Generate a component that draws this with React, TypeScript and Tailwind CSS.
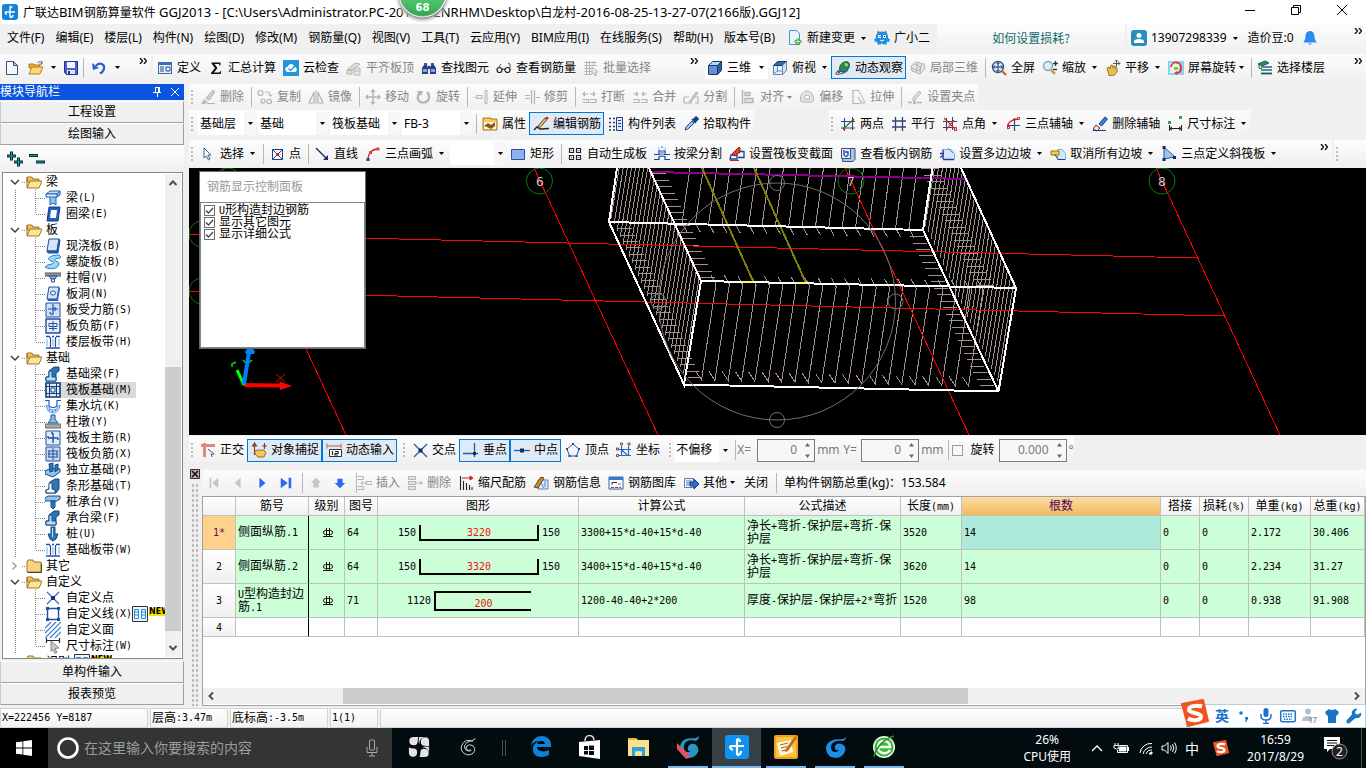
import React, { ReactNode } from "react";
import clsx from "clsx";

/* ---------- drawing helpers ---------- */

function P({ d, s = "none", f = "none", w = 1 }: { d: string; s?: string; f?: string; w?: number }) {
  return <path d={d} stroke={s} fill={f} strokeWidth={w} />;
}

const G = "#b4b4b4";
const N = "#1f3f94";
const R = "#d02020";

const icons: Record<string, ReactNode> = {
  newFile: <><P d="M2.500 1.500h7l4 4v9h-11z" s="#3d5272" f="#f4f9ff" /><P d="M9.500 1.500v4h4z" s="#3d5272" f="#b9cbe4" /></>,
  open: <><P d="M1 4h5l1 1h5v3H1z" f="#e0a93a" s="#b27c1c" /><P d="M1 14l3-7h11l-3 7z" f="#ffd978" s="#b9831f" /><P d="M9 3c2-2 4-2 5 0M14 1v3h-3" s="#3b6ea5" /></>,
  save: <><P d="M1.500 1.500h13v13h-11l-2-2z" s="#27318f" f="#4a5fd0" /><P d="M4 2h8v6H4z" f="#f2f5ff" /><P d="M4 10h8v4H4z" f="#dfe3f5" /><P d="M5 11h2v3H5z" f="#27318f" /></>,
  undo: <><P d="M5 5.500C9 2 14 4 13 8.500c-.4 2.500-2 4-4 5" s="#2d5fc4" w={2.2} /><P d="M1 3l1 7 6-2z" f="#2d5fc4" /></>,
  define: <><P d="M1 2h14v12H1z" f="#3a6cb4" /><P d="M2 5h12v8H2z" f="#e8f1fc" /><P d="M3 7h4M3 9h4M3 11h4M9 7h4M9 11h4M9 7v4M13 7v4" s="#274a86" /></>,
  sigma: <P d="M3.500 2.500h9v3h-1l-.5-1.500H6.500L9.500 8l-3.500 4.500h5.500l1-1.500h.7l-.4 3H3v-1L7 8 3.500 3.500z" f="#111" />,
  cloud: <><P d="M0 0h16v16H0z" f="#2196dc" /><P d="M3 11C1 8 4 6 5 7c0-4 6-4 6 0 4 0 3 5 1 5H4z" f="#fff" /><P d="M5.500 8.500l2 2L12 6" s="#2196dc" w={1.3} /></>,
  alignTop: <><P d="M1 10l8-7 5 1-7 6zM1 10h5v4H1z" f="#dedede" s={G} /><P d="M8 8h6v7H8zM8 11h6" s={G} f="#e9e9e9" /></>,
  binocular: <><P d="M3 3h3v3H3zM10 3h3v3h-3z" f="#3d5a9c" /><P d="M1 8l2-3h3l1 3v6H1zM15 8l-2-3h-3L9 8v6h6z" f="#253f82" /><P d="M2 9h4v3H2zM10 9h4v3h-4z" f="#86a6dc" /><P d="M7 6h2v3H7z" f="#253f82" /></>,
  glasses: <><P d="M1 10a2.500 2.500 0 1 0 5 0 2.500 2.500 0 1 0-5 0M9 10a2.500 2.500 0 1 0 5 0 2.500 2.500 0 1 0-5 0M6 9.500q1.500-1 3 0" s="#222" w={1.2} /><P d="M1 10l4-6M14 10V4l-2-1" s="#445577" /></>,
  batch: <><P d="M1.500 2.500h12M1.500 5.500h12M1.500 8.500h7M1.500 11.500h7M1.500 14.500h7M3.500 1v14M6.500 1v14M10.500 1v5" s={G} /><P d="M9 7l6 5-3 .3 1.500 3-1.500.5-1.300-3L9 14z" f="#eee" s={G} /></>,
  cube: <><P d="M1.500 5.500h9v9h-9z" f="#5e94cf" s="#1c3763" /><P d="M1.500 5.500l4-4h9l-4 4z" f="#b8d6f4" s="#1c3763" /><P d="M10.500 5.500l4-4v9l-4 4z" f="#2f62a3" s="#1c3763" /></>,
  topView: <><P d="M1.500 5.500h9v9h-9z" f="#e9f3fd" s="#5a86b8" /><P d="M1.500 5.500l4-4h9l-4 4z" f="#336cae" s="#1c3763" /><P d="M10.500 5.500l4-4v9l-4 4zM5.500 6v5l-4 3M5.500 11h5" s="#5a86b8" f="#cfe2f5" /></>,
  orbit: <><P d="M6 12C2 8 7 0 13 2c4 4-1 11-7 10z" f="#2f8f3c" s="#155c20" /><P d="M10 3c2 0 3 1 3 3-2 1-4-1-3-3z" f="#9be08f" /><P d="M1 14C1 11 8 7 14 8M1 14c3 1 9-1 12-4" s="#3d66a8" w={1.3} /><P d="M3 11h2v2H3z" f={R} /></>,
  partial3d: <><P d="M1 6l5-4 8 2 1 5-5 5-8-3z" f="#e6e6e6" s={G} /><P d="M4 4l7 3-1 6M1 8l8 3M8 2.500L6 12M12 3.500L9 11" s={G} /></>,
  full: <><P d="M1.500 7a5.500 5.500 0 1 0 11 0 5.500 5.500 0 1 0-11 0" f="#dcecff" s="#35507d" w={1.4} /><P d="M11 11l4 4" s="#b07c2a" w={2.4} /><P d="M7 2.500v9M2.500 7h9M5.500 4L7 2.500 8.500 4M5.500 10L7 11.500 8.500 10M4 5.500L2.500 7 4 8.500M10 5.500L11.500 7 10 8.500" s="#1a3470" /></>,
  zoom: <><P d="M1.500 6a4.500 4.500 0 1 0 9 0 4.500 4.500 0 1 0-9 0" f="#dcecff" s="#8aa" w={1.4} /><P d="M9 10l4 4" s="#c39a3a" w={2.4} /><P d="M13.500 1v5M11 3.500h5M11 9.500h4" s="#1a3470" w={1.3} /></>,
  pan: <><P d="M2 8l2-1 1 2 1-4 2 .5L8 8l1-2 1.500.5L10 9l2-1v4l-3 3.500H4z" f="#e9bd55" s="#a87a1c" /><P d="M11.500 0v7M8 3.500h7M10 1.500L11.500 0 13 1.500M13.500 2L15 3.500 13.500 5" s="#555" /></>,
  rotScreen: <><P d="M0 1h16v14H0z" f="#8fd0f5" /><P d="M2 3h9v10H2z" f="#eaf7da" /><P d="M3 7a5 5 0 0 1 10 1c0 3-2 5-5 5" s="#e23434" w={1.8} /><P d="M9 11v4l-3-2z" f="#e23434" /><P d="M6 7h4v3H6z" f="#7fc36a" /></>,
  floor: <><P d="M1 4l7-3 4 2-7 3z" f="#2f9158" s="#17613a" /><P d="M4 7h11M4 10h11" s="#2d5fa8" w={1.6} /><P d="M4 13.500h11" s="#17613a" w={1.8} /><P d="M2 5v3l3 1" s="#17613a" /></>,
  brushOff: <><P d="M6 9l7-8 2 2-6 8z" f="#cfcfcf" s={G} /><P d="M4 10l4 3-3 2H1z" f="#bdbdbd" /><P d="M7 14.500h8" s={G} /></>,
  copy: <><P d="M1 4a2.500 2.500 0 1 0 5 0 2.500 2.500 0 1 0-5 0M4 12a2 2 0 1 0 4 0 2 2 0 1 0-4 0M10 12.500a2 2 0 1 0 4.500 0 2 2 0 1 0-4.500 0" s={G} w={1.2} /><P d="M8 3h4l1.500 4M11.500 5.500l2 2 1.500-2" s={G} /></>,
  mirror: <><P d="M6 3v11H1zM10 3v11h5z" s={G} w={1.2} /><P d="M8 1v14" s={G} /></>,
  move: <P d="M8 1v14M1 8h14M6 3l2-2 2 2M6 13l2 2 2-2M3 6L1 8l2 2M13 6l2 2-2 2" s={G} w={1.4} />,
  rotate: <><P d="M4 3C-1 9 3 14 8 13.500S15 7 11 3" s={G} w={2.2} /><P d="M1 2h6l-2 5z" f={G} /></>,
  extend: <><P d="M1 8.500h2M4 6.500h5v3H4z" s={G} w={1.2} /><P d="M12 1.500h2v13h-2z" s={G} /></>,
  trim: <P d="M7.500 1v14M10.500 1v14M1 6.500h5M1 9.500h5M12 8.500h4" s={G} w={1.2} />,
  brk: <P d="M2 5h5M2 5l2-2M2 5l2 2M9 5h5M14 5l-2-2M14 5l-2 2M1.500 10.500h6v3h-6M9 10.500h6v3H9" s={G} w={1.2} />,
  merge: <P d="M1 5h5M6 5L4 3M6 5L4 7M10 5h5M10 5l2-2M10 5l2 2M1 10.500h6v3H1M9 10.500h6v3H9" s={G} w={1.2} />,
  split: <><P d="M1 8h5M1 8v6h8M11 8h4v6h-3" s={G} w={1.2} /><P d="M6 13l7-10 2 1-7 9z" f="#ccc" s={G} /></>,
  align: <><P d="M2.500 1v14" s={G} w={1.5} /><P d="M5 3.500h5v3H5zM5 9.500h8v4H5z" s={G} f="#e6e6e6" w={1.3} /></>,
  offset: <><P d="M1.500 11C1 5 5 2 8 2s7 3 6.500 9q0 2-2 2h-9q-2 0-2-2z" f="#e4e4e4" s={G} /><P d="M5 10q0-4 3-4t3 4z" f="#fff" s={G} /></>,
  stretch: <><P d="M9 1.500H3v13h6M8 8l4 6" s={G} w={1.2} /><P d="M9 2l6 12H9" s={G} /></>,
  grip: <><P d="M1 13.500h4M10 13.500h5" s={G} w={1.4} /><P d="M6 9l6-7 2 2-6 7-2 .5z" f="#ddd" s={G} /><P d="M6 12h3v3H6z" f="#bbb" /></>,
  prop: <><P d="M1 2h8v1h6v11H1z" f="#f7c76a" s="#b37a1e" /><P d="M2 6h12v7H2z" f="#fff4d4" /><P d="M2 10l4-3 3 2 4-3v4l-4 3-4-2z" f="#8a5a18" /></>,
  edit: <><P d="M1 14l3-3 3 2 9-.5" s="#222" w={1.4} /><P d="M5 10l7-8 2 1.500-7 8z" f="#e8b96a" s="#6b4a1c" /><P d="M12 2l1.500-1.500L16 2l-2 1.500z" f={R} /></>,
  list: <><P d="M1 2.500h2M5 2.500h2M1 6.500h2M5 6.500h2M1 10.500h2M5 10.500h2M1 14h2M5 14h2" s="#335" w={1.4} /><P d="M8.500 1.500h6v13h-6z" f="#dbe9fb" s={N} /><P d="M10 4.500h3M10 7.500h3M10 10.500h3" s={N} /></>,
  picker: <><P d="M2 14l1-3 6-6 2 2-6 6z" f="#9ec9ee" s="#27508e" /><P d="M9 3l4 4M10 4l3-3 2 2-3 3z" f="#1b3f86" s="#1b3f86" w={1.6} /></>,
  twoPt: <><P d="M4.500 2v13M12.500 1v13M1 5.500h14M1 12h14" s="#32407e" /><P d="M3 13L14 3" s="#267a2c" w={1.3} /><P d="M3 12h2v2H3zM12 3h2v2h-2z" f={R} /></>,
  parallel: <P d="M4.500 1v14M11.500 1v14M1 5h14M1 11h14" s="#32407e" w={1.3} />,
  ptAngle: <><P d="M4.500 2v13M10.500 1v13M1 5.500h14M1 11.500h10" s="#32407e" /><P d="M2 2l11 11M12 4L4 14" s={R} w={1.1} /><P d="M12.500 11.500h2v3h-2z" s={R} /></>,
  threeAxis: <><P d="M9.500 2v13M2 9.500h13" s="#32407e" w={1.2} /><P d="M3 13C1 7 7 3 14 3" s={R} w={1.3} /><P d="M2.500 10.500h2v2h-2zM12.500 1.500h2v2h-2z" s={R} f="#fff" /></>,
  eraser: <><P d="M7 8l6-7 2.500 2-6 7z" f="#3f7fd0" s="#1b3f86" /><P d="M4 9l4 3-3 3-4-2z" f="#f0dcdc" s="#8a2020" /><P d="M1 14.500h13" s="#1b3f86" /></>,
  dim: <><P d="M2.500 9v6M14.500 9v6M2.500 12.500h12M5 11l-2.500 1.500L5 14M12 11l2.500 1.500L12 14" s="#222" /><P d="M1 5h3v3H1zM12 0h3v3h-3z" f="#38a050" /></>,
  pointer: <P d="M4 2l7 7H8l2 4-1.500 1L6.500 10 4 12z" f="#fff" s="#44608a" />,
  point: <><P d="M3.500 3.500h10v10h-10z" s={N} f="#fff" /><P d="M3.500 3.500l10 10M13.500 3.500l-10 10" s={N} /><P d="M7 7h3v3H7z" f={R} /></>,
  line: <><P d="M2 2l11 11" s="#1a2f6c" w={1.4} /><P d="M14 14H9l5-5z" f="#1a2f6c" /></>,
  arc: <><P d="M3 14C3 7 7 3 13 3" s={R} w={1.3} /><P d="M1.500 12h3v3h-3z" f="#1f3f94" /><P d="M11.500 1.500h3v3h-3zM4 5h3v3H4z" f="#cf4c3a" /></>,
  rect: <P d="M1.500 3.500h13v10h-13z" f="#8fb2ee" s="#2c50a8" />,
  autoSlab: <><P d="M2.500 2.500h4v4h-4zM9.500 2.500h4v4h-4zM2.500 9.500h4v4h-4zM9.500 9.500h4v4h-4z" s="#222" w={1.2} /><P d="M4 4h1v1H4zM11 4h1v1h-1zM4 11h1v1H4zM11 11h1v1h-1z" f="#2a5dc0" /></>,
  beamCut: <><P d="M0 8.500h16M0 13.500h5v-3h6v3h5M5 8V5h6v3" s={N} w={1.2} /><P d="M6 5.500h4v5H6z" f="#8fb2ee" /><P d="M8 0v2M5 1.500l1 1M11 1.500l-1 1M4 4h1M11 4h1" s="#2a78d0" /></>,
  raft: <><P d="M2 9h6v4H1zM9 5.500h6v6H9" s={N} w={1.3} /><P d="M3 8l7-7 1 1v4l-5 4z" f="#e04030" s="#8a1c10" /><P d="M1 14.500h9" s={R} /></>,
  viewRebar: <><P d="M3 2.500h12v11l-2 2H2.500z" f="#a9c6ea" s="#35507d" /><P d="M1.500 2.500h9v10h-9z" f="#e6f0fb" s="#35507d" /><P d="M4 4v5q2 3 4 0V6H5" s={N} w={1.3} /></>,
  slope: <><P d="M4.500 3.500h8l3 4v6h-11z" f="#d4e6fb" s="#8aaedb" /><P d="M1 7.500h4M4 13.500h11M4 3.500v6l-3 2M4 9v4" s={N} w={1.3} /><P d="M9 2l5 5" s="#5b86be" /></>,
  cancelSlope: <><P d="M7.500 3.500h5l3 4v6h-8z" f="#d4e6fb" s="#8aaedb" /><P d="M1 5h8v4H1z" f="#f7d03d" s="#9b7510" /><P d="M5 8.500l3 5h7" s={N} /></>,
  threeSlope: <><P d="M3 1v12l11-2z" f="#9fc3ee" s="#26519b" /><P d="M1.500 0h3v3h-3zM1.500 12h3v3h-3zM12 10h3v3h-3z" f="#16295c" /></>,
  ortho: <><P d="M1 3.500h14M4.500 1v14" s="#d88a84" w={3} /><P d="M8 7l6 5-3 .5 1.500 2.500" f="#dce6f4" s="#44608a" /></>,
  snap: <><P d="M3.500 1v12M13.500 1v6M1 4h5M11 4h5M3.500 1l-2 3h4z" s="#8a3a3a" w={1.2} /><P d="M4 9l3-1 6 0 2 3-2 4H7l-3-3z" f="#f0c566" s="#97711f" /></>,
  dyn: <><P d="M1 1.500v5M15 1.500v5M1 4h14" s="#c0605a" /><P d="M3.500 7.500h12v7h-12z" f="#fff" s="#333" /><P d="M6.500 9v4M9 9.500h3v2H9v1.500h3" s="#222" w={1.2} /></>,
  cross: <><P d="M2 2l13 13M15 2L2 15" s="#1f5bb0" w={1.3} /><P d="M6.500 6.500h4v4h-4z" f="#1a2f6c" /></>,
  perp: <><P d="M0 11.500h15M11.500 1v14" s="#1f5bb0" w={1.3} /><P d="M10 10h3v3h-3z" f="#1a2f6c" /></>,
  mid: <><P d="M0 8.500h16" s="#1f5bb0" w={1.3} /><P d="M6 6.500h4v4H6z" f="#1a2f6c" /></>,
  vertex: <><P d="M8 2l6 5-2.500 7h-7L2 7z" s="#1f5bb0" /><P d="M7 1h2v2H7zM13 6h2v2h-2zM10.500 13h2v2h-2zM3.500 13h2v2h-2zM1 6h2v2H1z" f="#1f4a94" /></>,
  coord: <><P d="M5.500 4v10M12.500 4v10M3 7.500h12M3 13.500h12M5 7l7 7" s="#2a6cc0" w={1.2} /><P d="M4.500 1h2v2h-2zM12 1h2v2h-2zM.5 6h2v2h-2zM.5 12.500h2v2h-2z" s="#556" /></>,
  shrink: <><P d="M2.500 1v14M5.500 6v9M8.500 8v7M11.500 10v5M14 12v3" s="#222" w={1.1} /><P d="M4 3h10M12 1l3 2-3 2z" s={R} f={R} /></>,
  info: <><P d="M5 5h10v9H5z" f="#e0ebfa" s="#5b7fb0" /><P d="M1 12l7-10 3 1-6 10z" f="#c98d3c" s="#6a4210" /><P d="M8 8l3 5M12 6v6" s="#5b7fb0" /></>,
  lib: <><P d="M1 2h14v12H1z" f="#fff" s="#2f5fa8" /><P d="M1 2h14v3H1z" f="#3b78c8" /><P d="M4 10V7.500h5" s="#333" /><P d="M3 12.500h3M7 12.500h3M11 12.500h2" s={R} /><P d="M10 9h3" s="#38a050" /></>,
  other: <><P d="M1.500 3.500h9v9h-9z" f="#eef4fc" s="#5b7fb0" /><P d="M3 6h6M3 8h5M3 10h5" s="#5b7fb0" /><P d="M7 7h4V4l5 5-5 5v-3H7z" f="#2f6ad0" s="#17408c" /></>,
  insert: <P d="M1.500 1.500h6v3h-6M1.500 11.500h6v3h-6M5 8h6M10 6.500h6v3h-6zM7 6L5 8l2 2" s={G} />,
  remove: <P d="M1.500 1.500h7v3h-7zM1.500 6.500h7v3h-7zM1.500 11.500h7v3h-7zM9 8h7M13 6l2 2-2 2" s={G} f="#e4e4e4" />,
  first: <P d="M3 2h2v12H3zM13 2v12L6 8z" f="#c6c6c6" />,
  prev: <P d="M11 2v12L4 8z" f="#c6c6c6" />,
  next: <P d="M5 2v12l7-6z" f="#2a6af0" />,
  last: <P d="M11 2h3v12h-3zM2 2v12l8-6z" f="#2a6af0" />,
  up: <P d="M8 2l6 6h-3v5H5V8H2z" f="#c6c6c6" />,
  down: <P d="M8 14l6-6h-3V3H5v5H2z" f="#2a6af0" />,
  change: <><P d="M2.500 .5h7l3 3v11h-10z" f="#e9f5fd" s="#4d93c4" /><P d="M11 8l4 3.500-4 4-4-4z" f="#3da838" /><P d="M11 9v5M8.500 11.500h5" s="#c9f5b8" /></>,
  robot: <><P d="M8 1.500C3 1.500 1.500 5 2 8L0 9.500 1 12l2-.5.500 3h3l1-1h1l1 1h3l.5-3 2 .5 1-2.500L14 8c.5-3-1-6.500-6-6.500z" f="#1b8fe8" /><P d="M3 3l1-2.500L6 2.500M10 2.500l2-2L13 3" f="#1b8fe8" /><P d="M4 5h3v3H4zM9 5h3v3H9z" f="#fff" /><P d="M5.500 6h1v1h-1zM10 6h1v1h-1z" f="#111" /><P d="M6 10q2 2 4 0" s="#fff" /></>,
  user: <><rect width="16" height="16" rx="3" fill="#2b8cbe" /><P d="M5.500 5.500a2.500 2.500 0 1 0 5 0 2.500 2.500 0 1 0-5 0M3 13V11q1-2 5-2t5 2v2z" f="#fff" /></>,
  bell: <P d="M8 1c-4 0-4.500 4-4.500 6S2 11 1.500 12.500h13C14 11 12.500 9 12.500 7S12 1 8 1zM6 13.500q2 2.500 4 0z" f="#2a8cf0" />,
  /* tree */
  tBeam: <><P d="M1 4l4-3h10l-3 3z" f="#bfe0fa" s="#2060b0" /><P d="M5 5h6v10l-3-2-3 2zM12 4l3-3v4l-3 2z" f="#8cc4f0" s="#2060b0" /><P d="M1 4h11v3H1z" f="#dff0ff" s="#2060b0" /></>,
  tRing: <><P d="M4 1h11l-2 14H2z" f="#1f5fc0" s="#123c80" /><P d="M6 4h6l-1 8H5z" f="#fff" /></>,
  tSlab: <><P d="M4 1h10l-2 12H2z" f="#d4e4fa" s="#1f4fa0" /><P d="M14 1l1 1-2 13H3l-1-2h10z" f="#1f5fc0" s="#1f4fa0" /></>,
  tSpiral: <P d="M14 1C6 1 1 4 5 6.500c3 1.500 5 1 3 3C6 11 2 10 0 13c5 3 13 2 14-3 .5-3-7-3-4-5 2-1 5 0 6-2z" f="#9fd6f8" s="#1f7fd0" />,
  tCap: <><P d="M0 3h16v3H0z" f="#999" s="#555" /><P d="M4 6h8l-2 3H6z" f="#8fb8f0" s="#1f4fa0" /><P d="M6.500 9h3v3h-3z" f="#fff" s="#1f4fa0" /></>,
  tHole: <><P d="M4 1h10l-2 12H2z" f="#d4e4fa" s="#1f4fa0" /><P d="M14 1l1 1-2 13H3l-1-2h10z" f="#1f5fc0" /><P d="M5.500 7q0-2 2.500-2t2.500 2-2.500 2-2.500-2z" f="#fff" s="#1f4fa0" /></>,
  tForce: <><P d="M1 1h14v14H1z" f="#cfe0f8" s="#1f4fa0" /><P d="M8 2v10q-3 1-3-2M3 7h10M10 5v4" s="#1f4fa0" w={1.2} /></>,
  tNeg: <><P d="M1 1h14v14H1z" f="#e6effc" s="#1f4fa0" w={1.4} /><P d="M8 3v10M4 5.500h8M4 5.500v3h8v-3M4 10.500h8" s="#1f4fa0" /></>,
  tBand: <><P d="M1 2.500h4M7 2.500h2M11 2.500h4M1 14h14" s="#1f4fa0" w={1.6} /><P d="M5.500 3v10M10.500 3v10" s="#1f4fa0" w={1.2} /><P d="M2 5v7M8 5v7M14 5v7" s="#78a8e0" /></>,
  tFBeam: <><P d="M1 15v-4h3V5l5-4h5v4l-3 2v8z" f="#2f74b8" s="#164a80" /><P d="M1 11h3V5h3v6h4v4H1z" f="#b8dcf8" s="#164a80" /></>,
  tRaft: <><P d="M1 1h14v14H1z" f="#e0ecfb" s="#123c80" w={1.6} /><P d="M4.500 1v14M11.500 1v14M1 4.500h14M1 11.500h14" s="#123c80" /><P d="M6 6h4v4H6z" f="#fff" s="#123c80" /></>,
  tPit: <><P d="M0 2.500h4v4q0 3 4 3t4-3v-4h4" s="#1f5fc0" w={1.2} /><P d="M1 7q1 8 7 8t7-8l-2 1q-1 4-5 4T3 8z" f="#bcd8f6" s="#5fa0e0" /><P d="M4 12h1M7 13.500h1M10 12.500h1" s="#1f5fc0" /></>,
  tPier: <><P d="M6 1h4v4l3 4H3l3-4z" f="#8fb8f0" s="#1f4fa0" /><P d="M0 10h16v4H0z" f="#aaa" s="#666" /></>,
  tMain: <><P d="M1 1h14v14H1z" f="#e0ecfb" s="#1f4fa0" /><P d="M8 3v10M3 8h10M6 3h2M3 6v2M13 8v2" s="#1f4fa0" w={1.4} /></>,
  tMinus: <><P d="M1 1h14v14H1z" f="#c8dcf6" s="#1f4fa0" /><P d="M8 2v12M3 5h10M3 11h10M4 5v6M12 5v6M3 8h10" s="#1f4fa0" /></>,
  tSingle: <><P d="M0 9l6-3 9 1v3l-7 5-8-3z" f="#8fc4ee" s="#164a80" /><P d="M4 2l4-1v8L5 10zM10 3l3-1v6l-3 2z" f="#2f74b8" s="#164a80" /></>,
  tStrip: <><P d="M1 15v-3l3-1 1-7 5-3h4v10l-3 4z" f="#2f74b8" s="#164a80" /><P d="M1 15v-3l3-1V5h3v6l3 1v3z" f="#fff" s="#164a80" /></>,
  tCapPile: <><P d="M0 4l3-2h12v3l-3 2H0z" f="#8fc4ee" s="#164a80" /><P d="M6 7h4v6l-2 2-2-2z" f="#2f74b8" s="#164a80" /></>,
  tPile: <><P d="M6 1h4v7h3l-2 5-3 2-3-2-2-5h3z" f="#2f74b8" s="#164a80" /><P d="M7 2h1v9H7z" f="#cfe6fa" /></>,
  tPt: <><P d="M2 2l12 12M14 2L2 14" s="#2a6cc0" w={1.2} /><P d="M6 6h4v4H6z" f="#1a2f6c" /></>,
  tLn: <><P d="M2.500 2.500h11v11h-11z" s="#1f4fa0" w={1.4} /><P d="M1 1h3v3H1zM12 1h3v3h-3zM1 12h3v3H1zM12 12h3v3h-3z" f="#1f4fa0" /></>,
  tFace: <P d="M0 6l6-6M0 11L11 0M0 16L16 0M5 16L16 5M10 16l6-6" s="#3a7ad0" w={1.2} />,
  tDim: <><P d="M1.500 0v5M14.500 0v5M1 2.500h14" s="#222" w={1.2} /><P d="M6 3l8 7-4 .5 2 4-2 1-2-4-2 2z" f="#c8c8c8" s="#888" /></>,
  folder: <><P d="M1 4l1-2h5l1 2h7v10H1z" f="#f5d583" s="#9c7420" /><P d="M1.500 14.500h14v-9" s="#5c4210" /></>,
  folderOpen: <><P d="M1 3h5l1 2h6v3H1z" f="#e8bd5a" s="#a07822" /><P d="M1 3v11" s="#a07822" /><P d="M1 14l3-7h12l-3 7z" f="#fce19a" s="#a07822" /></>,
  cols: <><P d="M.5 .5h15v15H.5z" f="#eaf5ff" s="#333" /><P d="M2.500 3.500h4v9h-4zM9.500 3.500h4v9h-4zM2 6h5M2 9h5M9 6h5M9 9h5" s="#2a8ad8" /></>,
};

function Icon({ name, className = "size-4" }: { name: string; className?: string }) {
  return (
    <svg viewBox="0 0 16 16" className={clsx("shrink-0", className)} aria-hidden="true">
      {icons[name]}
    </svg>
  );
}

function Caret({ className = "" }: { className?: string }) {
  return (
    <svg viewBox="0 0 5 3" className={clsx("h-[3px] w-[5px] shrink-0", className)} aria-hidden="true">
      <path d="M0 0h5L2.500 3z" fill="currentColor" />
    </svg>
  );
}

const Sep = () => <div className="mr-px ml-1 h-5 w-px shrink-0 bg-[#b8b8b8]" />;

const Grip = () => (
  <div className="mr-[3px] ml-0.5 h-3.5 w-0.5 shrink-0 bg-[repeating-linear-gradient(to_bottom,#bdbdbd_0_2px,transparent_2px_4px)]" />
);

interface ToolProps {
  icon: string;
  label: string;
  off?: boolean;
  on?: boolean;
  drop?: "wide" | "tight";
}

function Tool({ icon, label, off, on, drop }: ToolProps) {
  return (
    <button
      className={clsx(
        "flex h-[23px] shrink-0 items-center border pr-0.5 pl-[3px] whitespace-nowrap",
        on ? "border-[#0078d7] bg-[#dfeaf5]" : "border-transparent",
        off ? "text-[#868686]" : "text-black",
      )}
    >
      <Icon name={icon} className="mr-1 size-4" />
      {label}
      {drop && <Caret className={drop === "wide" ? "mr-px ml-1.5" : "ml-[3px]"} />}
    </button>
  );
}

function Bar({ children, className = "" }: { children: ReactNode; className?: string }) {
  return (
    <div className={clsx("flex items-center bg-linear-to-b from-[#fcfcfc] to-[#f0f0f0]", className)}>{children}</div>
  );
}

function Combo({ label, value, className }: { label: string; value: string; className: string }) {
  return (
    <div className={clsx("grid h-[23px] shrink-0 items-center bg-white", className)}>
      <select
        aria-label={label}
        defaultValue={value}
        className="col-start-1 row-start-1 h-full w-full appearance-none bg-transparent pl-0.5 outline-none"
      >
        <option>{value}</option>
      </select>
      <span className="pointer-events-none col-start-1 row-start-1 grid h-full w-3 place-items-center justify-self-end bg-[#f6f6f6]">
        <Caret />
      </span>
    </div>
  );
}

const More = ({ className = "" }: { className?: string }) => (
  <button aria-label="更多" className={clsx("shrink-0 self-start pt-1", className)}>
    <svg viewBox="0 0 8 6" className="h-1.5 w-2" aria-hidden="true">
      <path d="M1 0l2.500 3L1 6M5 0l2.500 3L5 6" fill="none" stroke="#111" strokeWidth="1.400" />
    </svg>
  </button>
);

/* Sets the Latin runs of a mixed string apart from its Chinese glyphs. */
function Latin({ text, className }: { text: string; className: string }) {
  return (
    <>
      {text.split(/([\x20-\x7e]+)/).map((part, i) =>
        /^[\x20-\x7e]+$/.test(part) ? (
          <span key={i} className={className}>
            {part}
          </span>
        ) : (
          part
        ),
      )}
    </>
  );
}

const Mono = ({ text }: { text: string }) => <Latin text={text} className="font-['DejaVu_Sans_Mono',monospace] text-[10px]" />;

/* ---------- title and menus ---------- */

function TitleBar() {
  return (
    <header className="relative flex h-6 shrink-0 items-center bg-white">
      <svg viewBox="0 0 16 16" className="ml-0.5 size-4 shrink-0" aria-hidden="true">
        <rect width="16" height="16" rx="3" fill="#1283d8" />
        <path d="M8 2.500v11M3 8h10M3 8q0 2 2 2.500M8 13.500q3 0 3-2.500M10 4q-1-2-2-1.500" stroke="#fff" strokeWidth="1.400" fill="none" />
      </svg>
      <h1 className="ml-[5px] text-[12px] whitespace-nowrap">
        <Latin
          className="text-[13px]"
          text="广联达BIM钢筋算量软件 GGJ2013 - [C:\Users\Administrator.PC-2014052NRHM\Desktop\白龙村-2016-08-25-13-27-07(2166版).GGJ12]"
        />
      </h1>
      <div className="ml-auto flex items-center gap-[34px] pr-[18px] pb-1">
        <button aria-label="最小化">
          <svg viewBox="0 0 12 12" className="size-3"><path d="M1 6.500h10" stroke="#000" /></svg>
        </button>
        <button aria-label="还原">
          <svg viewBox="0 0 12 12" className="size-3" fill="none" stroke="#000"><path d="M1.500 3.500h7v7h-7zM3.500 3.500v-2h7v7h-2" /></svg>
        </button>
        <button aria-label="关闭">
          <svg viewBox="0 0 12 12" className="size-3" stroke="#000"><path d="M1 1l10 10M11 1L1 11" /></svg>
        </button>
      </div>
      <div className="absolute top-0 left-[392px] h-6 w-[60px] overflow-hidden">
        <svg viewBox="0 0 60 24" className="h-6 w-[60px]">
          <defs>
            <linearGradient id="ball" x1="0" y1="0" x2="0" y2="1">
              <stop offset="0.5" stopColor="#5fd07a" />
              <stop offset="1" stopColor="#2ea84c" />
            </linearGradient>
            <radialGradient id="ballShade">
              <stop offset="0.78" stopColor="#888" />
              <stop offset="1" stopColor="#fff" stopOpacity="0" />
            </radialGradient>
          </defs>
          <circle cx="30.500" cy="-5" r="29" fill="url(#ballShade)" />
          <circle cx="30.500" cy="-6.500" r="24" fill="#eef5ee" />
          <circle cx="30.500" cy="-6.500" r="22.500" fill="url(#ball)" stroke="#5a8f66" strokeWidth="0.800" />
          <text x="30.500" y="11" textAnchor="middle" className="font-['DejaVu_Sans',sans-serif] text-[10px] font-bold" fill="#fff">68</text>
        </svg>
      </div>
    </header>
  );
}

const menus = [
  "文件(F)", "编辑(E)", "楼层(L)", "构件(N)", "绘图(D)", "修改(M)", "钢筋量(Q)", "视图(V)",
  "工具(T)", "云应用(Y)", "BIM应用(I)", "在线服务(S)", "帮助(H)", "版本号(B)",
];

function MenuRow() {
  return (
    <div className="flex h-[30px] shrink-0 items-center gap-0.5 pb-0.5">
      <nav className="flex w-[935px] shrink-0 items-center pl-[7px]">
        <div className="flex gap-[11px]">
          {menus.map((m) => (
            <button key={m} className="whitespace-nowrap">{m}</button>
          ))}
        </div>
        <span className="ml-2 flex">
          <Tool icon="change" label="新建变更" drop="wide" />
          <Tool icon="robot" label="广小二" />
        </span>
      </nav>
      <Bar className="h-[28px] w-[188px] shrink-0 justify-center">
        <a href="#loss" className="font-['Noto_Sans_CJK_SC',sans-serif] text-[#0e6b6b]">如何设置损耗?</a>
      </Bar>
      <Bar className="h-[28px] min-w-0 flex-1">
        <Tool icon="user" label="13907298339" drop="wide" />
        <span className="ml-1.5 whitespace-nowrap">造价豆:0</span>
        <button aria-label="通知" className="ml-2"><Icon name="bell" /></button>
        <More className="mr-1 ml-auto" />
      </Bar>
    </div>
  );
}

function MainToolbar() {
  const iconBtn = (n: string, l: string, c: string) => (
    <button aria-label={l} className={c}><Icon name={n} /></button>
  );
  return (
    <div className="flex h-[30px] shrink-0 items-start">
      <Bar className="mr-0.5 h-[27px] w-[151px] shrink-0 pl-1">
        {iconBtn("newFile", "新建", "")}
        {iconBtn("open", "打开", "ml-2")}
        <Caret className="mx-[7px]" />
        {iconBtn("save", "保存", "")}
        <Sep />
        {iconBtn("undo", "撤销", "ml-1.5")}
        <Caret className="ml-2" />
        <More className="mr-1 ml-auto" />
      </Bar>
      <Bar className="h-[27px] w-[550px] shrink-0">
        <Tool icon="define" label="定义" />
        <Tool icon="sigma" label="汇总计算" />
        <Tool icon="cloud" label="云检查" />
        <Tool icon="alignTop" label="平齐板顶" off />
        <Tool icon="binocular" label="查找图元" />
        <Tool icon="glasses" label="查看钢筋量" />
        <Tool icon="batch" label="批量选择" off />
        <More className="mr-[5px] ml-auto" />
      </Bar>
      <Bar className="h-[27px] min-w-0 flex-1">
        <button className="ml-0.5 flex h-[23px] w-[63px] shrink-0 items-center bg-white pl-0.5">
          <Icon name="cube" className="mr-1 size-4" />
          三维
          <Caret className="mr-1 ml-auto" />
        </button>
        <Tool icon="topView" label="俯视" drop="wide" />
        <Tool icon="orbit" label="动态观察" on />
        <Tool icon="partial3d" label="局部三维" off />
        <Sep />
        <Tool icon="full" label="全屏" />
        <Tool icon="zoom" label="缩放" drop="wide" />
        <Tool icon="pan" label="平移" drop="wide" />
        <Tool icon="rotScreen" label="屏幕旋转" drop="tight" />
        <Sep />
        <Tool icon="floor" label="选择楼层" />
        <More className="mr-1 ml-auto" />
      </Bar>
    </div>
  );
}

/* ---------- left navigation ---------- */

interface Node {
  label: string;
  icon?: string;
  level: 0 | 1;
  closed?: boolean;
  selected?: boolean;
  fresh?: boolean;
}

const g = (label: string, closed = false, fresh = false): Node => ({ label, level: 0, closed, fresh });
const c = (label: string, icon: string, extra: Partial<Node> = {}): Node => ({ label, icon, level: 1, ...extra });

const tree: Node[] = [
  g("梁"), c("梁(L)", "tBeam"), c("圈梁(E)", "tRing"),
  g("板"), c("现浇板(B)", "tSlab"), c("螺旋板(B)", "tSpiral"), c("柱帽(V)", "tCap"), c("板洞(N)", "tHole"),
  c("板受力筋(S)", "tForce"), c("板负筋(F)", "tNeg"), c("楼层板带(H)", "tBand"),
  g("基础"), c("基础梁(F)", "tFBeam"), c("筏板基础(M)", "tRaft", { selected: true }), c("集水坑(K)", "tPit"),
  c("柱墩(Y)", "tPier"), c("筏板主筋(R)", "tMain"), c("筏板负筋(X)", "tMinus"), c("独立基础(P)", "tSingle"),
  c("条形基础(T)", "tStrip"), c("桩承台(V)", "tCapPile"), c("承台梁(F)", "tFBeam"), c("桩(U)", "tPile"),
  c("基础板带(W)", "tBand"),
  g("其它", true), g("自定义"), c("自定义点", "tPt"), c("自定义线(X)", "tLn", { fresh: true }),
  c("自定义面", "tFace"), c("尺寸标注(W)", "tDim"),
  g("识别", true, true),
];

const Fresh = () => (
  <>
    <Icon name="cols" />
    <span className="mb-1 ml-px bg-[#ffe000] font-['DejaVu_Sans',sans-serif] text-[8px] leading-[8px] font-bold">NEW</span>
  </>
);

function TreeRow({ node, last }: { node: Node; last: boolean }) {
  if (node.level === 0) {
    return (
      <li className="flex h-4 shrink-0 items-center">
        <svg viewBox="0 0 23 16" className="h-4 w-[23px] shrink-0" fill="none" aria-hidden="true">
          {node.closed ? (
            <path d="M9.500 4.500L13 8l-3.500 3.500" stroke="#a0a0a0" strokeWidth="1.500" />
          ) : (
            <path d="M8 6l4 4 4-4" stroke="#404040" strokeWidth="1.500" />
          )}
          <path d="M19 8.500h4" stroke="#808080" strokeDasharray="1 1" />
        </svg>
        <Icon name={node.closed ? "folder" : "folderOpen"} />
        <button className="ml-1 whitespace-nowrap"><Mono text={node.label} /></button>
        {node.fresh && <span className="ml-1 flex items-center"><Fresh /></span>}
      </li>
    );
  }
  return (
    <li className="flex h-4 shrink-0 items-center">
      <svg viewBox="0 0 42 16" className="h-4 w-[42px] shrink-0" fill="none" stroke="#808080" strokeDasharray="1 1" aria-hidden="true">
        <path d="M12.500 0v16" />
        <path d={last ? "M32.500 0v8M33 8.500h9" : "M32.500 0v16M33 8.500h9"} />
      </svg>
      <button className={clsx("flex h-4 items-center whitespace-nowrap", node.selected && "bg-[#d9d9d9] pr-1")}>
        <Icon name={node.icon!} className="mr-[5px] size-4" />
        <Mono text={node.label} />
      </button>
      {node.fresh && <Fresh />}
    </li>
  );
}

function NavButton({ children }: { children: ReactNode }) {
  return (
    <button className="h-[22px] w-full shrink-0 border border-t-white border-r-[#a0a0a0] border-b-[#a0a0a0] border-l-[#c8c8c8] bg-[#f0f0f0]">
      {children}
    </button>
  );
}

function Navigator() {
  return (
    <aside className="flex w-[185px] shrink-0 flex-col pr-px">
      <div className="mb-px flex h-4 shrink-0 items-center bg-[#0a54e0] text-white">
        <span>模块导航栏</span>
        <svg viewBox="0 0 10 10" className="ml-auto size-2.5" fill="none" stroke="#fff"><path d="M3.500 0v5M6.500 0v5M3 .5h4M1 5.500h8M5.500 6v4M7.500 0v5" /></svg>
        <svg viewBox="0 0 10 10" className="mr-1 ml-2 size-2.5" stroke="#fff"><path d="M1 1l8 8M9 1L1 9" /></svg>
      </div>
      <NavButton>工程设置</NavButton>
      <NavButton>绘图输入</NavButton>
      <div className="flex h-[27px] shrink-0 items-center gap-1.5 bg-linear-to-b from-[#fdfdfd] to-[#f0f0f0] pl-[7px]">
        <button aria-label="全部展开">
          <svg viewBox="0 0 16 16" className="size-4" fill="none"><path d="M0 5h9M4.500 .5v9M7 11h9M11.500 6.500v9" stroke="#0b2b2b" strokeWidth="3" /><path d="M.5 5h8M4.500 1v8M7.500 11h8M11.500 7v8" stroke="#10a0a0" /></svg>
        </button>
        <button aria-label="全部折叠">
          <svg viewBox="0 0 16 16" className="size-4" fill="none"><path d="M0 4.500h9M7 11h9" stroke="#0b2b2b" strokeWidth="3" /><path d="M.5 4.500h8M7.500 11h8" stroke="#10a0a0" /></svg>
        </button>
      </div>
      <div className="mr-px ml-0.5 flex min-h-0 flex-1 border border-[#828790] bg-white">
        <ul className="flex min-w-0 flex-1 flex-col overflow-hidden pt-px">
          {tree.map((n, i) => (
            <TreeRow key={i} node={n} last={!tree[i + 1] || tree[i + 1].level === 0} />
          ))}
        </ul>
        <div className="my-px mr-px flex w-4 shrink-0 flex-col items-center bg-[#f0f0f0]">
          <svg viewBox="0 0 16 18" className="h-[18px] w-4" fill="none"><path d="M4.500 11L8 7.500l3.500 3.500" stroke="#505050" strokeWidth="2" /></svg>
          <div className="min-h-0 w-full flex-[175]" />
          <div className="w-full flex-[265] bg-[#cdcdcd]" />
          <div className="min-h-0 w-full flex-[8]" />
          <svg viewBox="0 0 16 18" className="h-[18px] w-4" fill="none"><path d="M4.500 7L8 10.500 11.500 7" stroke="#505050" strokeWidth="2" /></svg>
        </div>
      </div>
      <div className="mt-0.5 shrink-0 pb-px">
        <NavButton>单构件输入</NavButton>
        <NavButton>报表预览</NavButton>
      </div>
    </aside>
  );
}

/* ---------- 3D view ---------- */

const range = (n: number) => Array.from({ length: n }, (_, i) => i);
const r1 = (n: number) => Math.round(n * 10) / 10;

const frontBars = range(21)
  .map((k) => {
    const x = 715 + 13.35 * k;
    const y = 283 + 0.3 * k;
    return `M${r1(x - 4)} ${r1(y - 8)}l5 9L${r1(x - 13.5)} ${r1(y + 97)}l-6 -9`;
  })
  .join("");
const backBars = range(18)
  .map((k) => {
    const x = 682 + 13.35 * k;
    const y = 223 + 0.32 * k;
    return `M${r1(x + 8)} 168L${r1(x)} ${r1(y)}l5 9`;
  })
  .join("");
const sideBars = (x0: number, y0: number, dir: 1 | -1) =>
  range(25)
    .map((k) => {
      const x = x0 + 3.02 * k;
      const y = y0 + 6.48 * k;
      const a = dir === 1 ? x + 6 : x - 16;
      const b = dir === 1 ? x + 18 : x - 2;
      return `M${r1(x + 2)} ${r1(y - 4)}l16 -98M${r1(a)} ${r1(y)}h14M${r1(b)} ${r1(y - 100)}h${dir === 1 ? 15 : -18}`;
    })
    .join("");

function Scene() {
  return (
    <svg viewBox="189 168 1177 267" preserveAspectRatio="xMinYMin slice" className="h-full w-full" fill="none">
      <g shapeRendering="crispEdges">
        <g stroke="#a2928c">
          <path d={frontBars} />
          <path d={backBars} />
          <path d={sideBars(609, 222, 1)} />
          <path d={sideBars(923, 230, -1)} />
        </g>
        <g stroke="#ff0000">
          <path d="M189 234L1197 258M189 291L1225 316" />
          <path d="M222 168L346 435M534 168L658 435M845 168L969 435M1156 168L1280 435" />
        </g>
        <path d="M651 172L968 179" stroke="#8b008b" strokeWidth="2" />
        <path d="M702 168L753 281M754 168L806 283" stroke="#808000" strokeWidth="2" />
        <g stroke="#ffffff" strokeWidth="2">
          <path d="M617 168L609 222L684 384.500L701 281L649 168" />
          <path d="M609 222L923 230L932.500 168M923 230L998.500 391.500" />
          <path d="M701 281L1016 288L961 168M1016 288L998.500 391.500L684 384.500" />
        </g>
        <path d="M743 281.500h11M797 283h9" stroke="#ffff40" strokeWidth="2" />
      </g>
      <g stroke="#707070">
        <circle cx="777" cy="301.500" r="118.500" />
        <circle cx="777" cy="183" r="7.500" />
        <circle cx="777" cy="420" r="7.500" />
        <circle cx="895.500" cy="301.500" r="7.500" />
        <circle cx="658.500" cy="301.500" r="7.500" />
      </g>
      <g stroke="#0a7a0a">
        <circle cx="228" cy="181" r="13" />
        <circle cx="202" cy="234" r="13" />
        <circle cx="202" cy="291" r="13" />
        <circle cx="539.500" cy="181" r="13" />
        <circle cx="851" cy="181" r="13" />
        <circle cx="1162" cy="181" r="13" />
      </g>
      <g fill="#c8c8c8" textAnchor="middle" className="font-['DejaVu_Sans_Mono',monospace] text-[13px]">
        <text x="540" y="186">6</text>
        <text x="851" y="186">7</text>
        <text x="1162" y="186">8</text>
      </g>
      <path d="M244 385L282 385.500" stroke="#ff0000" strokeWidth="4" />
      <path d="M280 381.500l12 4.500-12 4z" fill="#ff0000" />
      <path d="M276 374l9 8M285 374l-9 8" stroke="#d01010" />
      <path d="M244 385L237 370" stroke="#00ff00" strokeWidth="3" />
      <path d="M232 367v-3l4-2M243 360l4 4 5-4M247 364v4" stroke="#00e000" strokeWidth="1.500" />
      <path d="M244 384L249 352" stroke="#007fff" strokeWidth="4" />
      <path d="M245 352l5-8 5 8-1 2h-8z" fill="#007fff" />
    </svg>
  );
}

function RebarPanel() {
  return (
    <section className="absolute top-[3px] left-2.5 flex h-[178px] w-[167px] flex-col border border-[#6a6a6a] bg-white">
      <h2 className="flex h-[30px] shrink-0 items-center pl-[7px] text-[#9a9a9a]">钢筋显示控制面板</h2>
      <div className="flex-1 border border-[#828790] pt-px pl-[3px]">
        {["U形构造封边钢筋", "显示其它图元", "显示详细公式"].map((t) => (
          <label key={t} className="flex h-3 items-center gap-1 leading-3 whitespace-nowrap">
            <span className="grid">
              <input type="checkbox" defaultChecked className="peer col-start-1 row-start-1 size-[11px] appearance-none border border-[#6c6c6c] bg-white" />
              <svg viewBox="0 0 11 11" className="pointer-events-none invisible col-start-1 row-start-1 size-[11px] peer-checked:visible" fill="none">
                <path d="M2 5.500l2.500 2.500L9 3" stroke="#444" strokeWidth="1.300" />
              </svg>
            </span>
            <span><Mono text={t} /></span>
          </label>
        ))}
      </div>
    </section>
  );
}

/* ---------- tool rows above and below the view ---------- */

function EditRows() {
  return (
    <>
      <div className="flex h-[26px] shrink-0">
        <Bar>
          <Grip />
          <Tool icon="brushOff" label="删除" off /><Sep />
          <Tool icon="copy" label="复制" off />
          <Tool icon="mirror" label="镜像" off /><Sep />
          <Tool icon="move" label="移动" off />
          <Tool icon="rotate" label="旋转" off /><Sep />
          <Tool icon="extend" label="延伸" off />
          <Tool icon="trim" label="修剪" off /><Sep />
          <Tool icon="brk" label="打断" off />
          <Tool icon="merge" label="合并" off />
          <Tool icon="split" label="分割" off /><Sep />
          <Tool icon="align" label="对齐" off drop="tight" />
          <Tool icon="offset" label="偏移" off />
          <Tool icon="stretch" label="拉伸" off /><Sep />
          <Tool icon="grip" label="设置夹点" off />
        </Bar>
      </div>
      <div className="mb-[3px] flex h-[27px] shrink-0 gap-[75px]">
        <Bar>
          <Grip />
          <div className="ml-0.5 flex gap-0.5">
            <Combo label="楼层" value="基础层" className="w-[58px]" />
            <Combo label="构件类型" value="基础" className="w-[70px]" />
            <Combo label="构件" value="筏板基础" className="w-[70px]" />
            <Combo label="名称" value="FB-3" className="w-[70px]" />
          </div>
          <Sep />
          <Tool icon="prop" label="属性" />
          <Tool icon="edit" label="编辑钢筋" on />
          <Tool icon="list" label="构件列表" />
          <Tool icon="picker" label="拾取构件" />
        </Bar>
        <Bar>
          <Grip />
          <Tool icon="twoPt" label="两点" />
          <Tool icon="parallel" label="平行" />
          <Tool icon="ptAngle" label="点角" drop="wide" />
          <Tool icon="threeAxis" label="三点辅轴" drop="wide" />
          <Tool icon="eraser" label="删除辅轴" />
          <Tool icon="dim" label="尺寸标注" drop="wide" />
        </Bar>
      </div>
      <div className="mb-px flex h-[27px] shrink-0 gap-0.5">
        <Bar className="flex-1">
          <Grip />
          <Tool icon="pointer" label="选择" drop="wide" /><Sep />
          <Tool icon="point" label="点" /><Sep />
          <Tool icon="line" label="直线" />
          <Tool icon="arc" label="三点画弧" drop="wide" />
          <Combo label="画弧方式" value="" className="ml-0.5 w-14" />
          <Tool icon="rect" label="矩形" /><Sep />
          <Tool icon="autoSlab" label="自动生成板" />
          <Tool icon="beamCut" label="按梁分割" />
          <Tool icon="raft" label="设置筏板变截面" />
          <Tool icon="viewRebar" label="查看板内钢筋" />
          <Tool icon="slope" label="设置多边边坡" drop="wide" />
          <Tool icon="cancelSlope" label="取消所有边坡" drop="wide" />
          <Tool icon="threeSlope" label="三点定义斜筏板" drop="wide" />
          <More className="mr-1 ml-auto" />
        </Bar>
        <Bar className="w-8 shrink-0"><Grip /></Bar>
      </div>
    </>
  );
}

function Spin({ label, value, className }: { label: string; value: string; className: string }) {
  return (
    <span className={clsx("flex h-[23px] shrink-0 items-center border border-[#7a7a7a] bg-[#f7f7f7]", className)}>
      <input aria-label={label} defaultValue={value} className="w-full min-w-0 bg-transparent text-right outline-none" />
      <svg viewBox="0 0 5 15" className="mr-1 ml-2 h-[15px] w-[5px] shrink-0" aria-hidden="true">
        <path d="M0 3.500h5L2.500 0zM0 11.500h5L2.500 15z" fill="#666" />
      </svg>
    </span>
  );
}

function SnapRow() {
  return (
    <div className="mt-px flex h-7 shrink-0">
      <Bar>
        <Grip />
        <Tool icon="ortho" label="正交" />
        <Tool icon="snap" label="对象捕捉" on />
        <Tool icon="dyn" label="动态输入" on />
        <span className="w-1" />
        <Grip />
        <Tool icon="cross" label="交点" />
        <Tool icon="perp" label="垂点" on />
        <Tool icon="mid" label="中点" on />
        <Tool icon="vertex" label="顶点" />
        <Tool icon="coord" label="坐标" />
        <span className="w-1" />
        <Grip />
        <Combo label="偏移方式" value="不偏移" className="w-[57px]" />
        <Sep />
        <span className="flex items-center text-[#7a7a7a]">
          <span className="w-5">X=</span>
          <Spin label="X" value="0" className="w-[58px]" />
          <span className="ml-0.5 w-6">mm</span>
          <span className="w-5 pl-0.5">Y=</span>
          <Spin label="Y" value="0" className="w-[58px]" />
          <span className="ml-0.5">mm</span>
        </span>
        <Sep />
        <label className="ml-0.5 flex items-center gap-2 whitespace-nowrap">
          <input type="checkbox" className="size-[11px] appearance-none border border-[#9a9a9a] bg-[#f7f7f7]" />
          旋转
        </label>
        <span className="ml-1 flex items-center gap-0.5 text-[#7a7a7a]">
          <Spin label="角度" value="0.000" className="w-[68px]" />
          °
        </span>
      </Bar>
    </div>
  );
}

/* ---------- rebar table ---------- */

function RebarToolbar() {
  const nav = (n: string, l: string) => (
    <button aria-label={l} className="grid h-6 w-6 shrink-0 place-items-center"><Icon name={n} className="size-3.5" /></button>
  );
  return (
    <Bar className="mt-[3px] h-[25px] shrink-0">
      {nav("first", "首条")}{nav("prev", "上一条")}{nav("next", "下一条")}{nav("last", "末条")}
      <Sep />
      {nav("up", "上移")}{nav("down", "下移")}
      <Sep />
      <span className="-ml-1.5 flex">
        <Tool icon="insert" label="插入" off />
        <Tool icon="remove" label="删除" off />
        <Tool icon="shrink" label="缩尺配筋" />
        <Tool icon="info" label="钢筋信息" />
        <Tool icon="lib" label="钢筋图库" />
        <Tool icon="other" label="其他" drop="tight" />
      </span>
      <button className="ml-1.5 shrink-0 pr-1">关闭</button>
      <Sep />
      <output className="ml-1.5 whitespace-nowrap">单构件钢筋总重(kg)：153.584</output>
    </Bar>
  );
}

const Level = () => (
  <svg viewBox="0 0 10 10" className="mx-auto h-2.5 w-2.5" fill="none" stroke="#111" role="img" aria-label="HRB400">
    <path d="M3.500 0v9M6.500 0v9M0 8.500h10" shapeRendering="crispEdges" />
    <rect x="0.500" y="2.500" width="9" height="4" rx="2" />
  </svg>
);

const UShape = ({ length }: { length: string }) => (
  <span className="flex items-center justify-center gap-[3px]">
    <Mono text="150" />
    <span className="h-4 w-[120px] border-2 border-t-0 border-black text-center leading-[14px] text-[#f01010]">
      <Mono text={length} />
    </span>
    <Mono text="150" />
  </span>
);

const rows = [
  { no: "1*", name: "侧面纵筋.1", fig: "64", shape: <UShape length="3220" />, formula: "3300+15*d-40+15*d-40", desc: "净长+弯折-保护层+弯折-保护层", len: "3520", n: "14", unit: "2.172", total: "30.406" },
  { no: "2", name: "侧面纵筋.2", fig: "64", shape: <UShape length="3320" />, formula: "3400+15*d-40+15*d-40", desc: "净长+弯折-保护层+弯折-保护层", len: "3620", n: "14", unit: "2.234", total: "31.27" },
  {
    no: "3", name: "U型构造封边筋.1", fig: "71",
    shape: (
      <span className="flex items-center justify-center gap-[3px] pr-5">
        <Mono text="1120" />
        <span className="h-5 w-[97px] border-2 border-r-0 border-black text-center leading-5 text-[#f01010]"><Mono text="200" /></span>
      </span>
    ),
    formula: "1200-40-40+2*200", desc: "厚度-保护层-保护层+2*弯折", len: "1520", n: "98", unit: "0.938", total: "91.908",
  },
];

const heads = ["", "筋号", "级别", "图号", "图形", "计算公式", "公式描述", "长度(mm)", "根数", "搭接", "损耗(%)", "单重(kg)", "总重(kg)"];

function RebarTable() {
  const cell = "border-r border-b border-[#c0c0c0] p-0 pl-0.5 text-left";
  const nameCell = "border-r border-b border-r-black border-b-[#c0c0c0] p-0 pl-0.5";
  return (
    <table className="w-full table-fixed border-separate border-spacing-0 leading-3">
      <colgroup>
        <col className="w-[33px]" /><col className="w-[73px]" /><col className="w-9" /><col className="w-[33px]" />
        <col className="w-[201px]" /><col className="w-[166px]" /><col className="w-[156px]" /><col className="w-[61px]" />
        <col /><col className="w-[39px]" /><col className="w-[49px]" /><col className="w-[62px]" /><col className="w-[54px]" />
      </colgroup>
      <thead>
        <tr className="h-[19px]">
          {heads.map((h, i) => (
            <th
              key={i}
              className={clsx(
                "border-r border-b border-[#c0c0c0] p-0 text-center font-normal whitespace-nowrap",
                i === 8 ? "bg-linear-to-b from-[#fbdca6] to-[#f1bb58] text-[#4b0056]" : "bg-linear-to-b from-white to-[#f0f0f0]",
              )}
            >
              <Mono text={h} />
            </th>
          ))}
        </tr>
      </thead>
      <tbody>
        {rows.map((r, i) => (
          <tr key={r.no} className="h-[34px] bg-[#ccffd8]">
            <th className={clsx("border-r border-b border-[#c0c0c0] p-0 font-normal", i === 0 ? "bg-[#ffd28c] text-[#6b0070]" : "bg-linear-to-b from-white to-[#f0f0f0]")}>
              <Mono text={r.no} />
            </th>
            <td className={nameCell}><Mono text={r.name} /></td>
            <td className={cell}><Level /></td>
            <td className={cell}><Mono text={r.fig} /></td>
            <td className={cell}>{r.shape}</td>
            <td className={cell}><Mono text={r.formula} /></td>
            <td className={cell}><Mono text={r.desc} /></td>
            <td className={cell}><Mono text={r.len} /></td>
            <td className={clsx(cell, i === 0 && "bg-[#aeead9]")}><Mono text={r.n} /></td>
            <td className={cell}><Mono text="0" /></td>
            <td className={cell}><Mono text="0" /></td>
            <td className={cell}><Mono text={r.unit} /></td>
            <td className={cell}><Mono text={r.total} /></td>
          </tr>
        ))}
        <tr className="h-[19px]">
          <th className="border-r border-b border-[#c0c0c0] bg-linear-to-b from-white to-[#f0f0f0] p-0 font-normal"><Mono text="4" /></th>
          <td className={nameCell} />
          {range(11).map((k) => <td key={k} className={cell} />)}
        </tr>
      </tbody>
    </table>
  );
}

function RebarPane() {
  return (
    <section className="mt-[3px] flex h-[239px] shrink-0">
      <div className="flex w-[13px] shrink-0 flex-col items-center gap-1 pr-0.5">
        <svg viewBox="0 0 10 10" className="mt-0.5 size-2.5 shrink-0"><path d="M.5 .5h9v9h-9z" fill="#c9a6a6" stroke="#333" /><path d="M2 2l6 6M8 2L2 8" stroke="#111" strokeWidth="1.500" /></svg>
        <div className="min-h-0 w-2 flex-1 bg-[radial-gradient(circle,#b4b4b4_1px,transparent_1.500px)] bg-size-[4px_5px]" />
      </div>
      <div className="flex min-w-0 flex-1 flex-col">
        <RebarToolbar />
        <div className="mt-px flex min-h-0 flex-1 flex-col border border-[#a0a0a0] bg-white">
          <RebarTable />
          <div className="mt-auto mb-px flex h-4 shrink-0 items-center bg-[#f0f0f0]">
            <svg viewBox="0 0 16 16" className="size-4 shrink-0" fill="none"><path d="M10 4.500L6.500 8l3.500 3.500" stroke="#505050" strokeWidth="2" /></svg>
            <div className="flex-[124]" />
            <div className="h-full flex-[625] bg-[#cdcdcd]" />
            <div className="flex-[381]" />
            <svg viewBox="0 0 16 16" className="size-4 shrink-0" fill="none"><path d="M6 4.500L9.500 8 6 11.500" stroke="#505050" strokeWidth="2" /></svg>
          </div>
        </div>
      </div>
    </section>
  );
}

/* ---------- status bar, input method, taskbar ---------- */

const SLogo = ({ className }: { className: string }) => (
  <svg viewBox="0 0 28 28" className={className} aria-hidden="true">
    <path d="M1 5L22 1l5 21-20 5z" fill="#f15322" stroke="#f15322" strokeWidth="2" strokeLinejoin="round" />
    <path d="M21 7.500C15 5.500 7.500 7.500 8 11s12 2.500 12 6.500-8 5-13 2" fill="none" stroke="#fff" strokeWidth="4" />
  </svg>
);

function StatusBar() {
  const box = "flex items-center border border-[#d4d4d4] bg-linear-to-b from-white to-[#f2f2f2] pl-px whitespace-pre";
  return (
    <footer className="relative flex h-[22px] shrink-0 gap-0.5 pt-0.5">
      <div className={clsx(box, "w-[148px]")}><Mono text="X=222456 Y=8187" /></div>
      <div className={clsx(box, "w-[78px]")}><Mono text="层高:3.47m" /></div>
      <div className={clsx(box, "w-[98px]")}><Mono text="底标高:-3.5m" /></div>
      <div className={clsx(box, "w-12")}><Mono text="1(1)" /></div>
      <div className={clsx(box, "flex-1")} />
      <div className="absolute right-0 bottom-0 flex h-6 w-[180px] items-center border border-[#b8cfe0] bg-white pl-6 text-[#1a73c8] *:shrink-0">
        <SLogo className="absolute bottom-0 -left-1.5 size-7" />
        <span className="w-[22px] text-center text-[14px] font-bold">英</span>
        <svg viewBox="0 0 22 16" className="h-4 w-[22px]" fill="#1a73c8"><circle cx="8" cy="5" r="1.800" /><path d="M12 9h3v2l-2 3h-1l1-3h-1z" /></svg>
        <svg viewBox="0 0 22 16" className="h-4 w-[22px]" fill="none"><rect x="8.500" y="0" width="5" height="9" rx="2.500" fill="#1a73c8" /><path d="M6 6v2q0 4 5 4t5-4V6M11 12v3M8 15.500h6" stroke="#1a73c8" strokeWidth="1.500" /></svg>
        <svg viewBox="0 0 22 16" className="h-4 w-[22px]" fill="none"><rect x="3.700" y="2.700" width="14.600" height="11" rx="1.500" stroke="#1a73c8" strokeWidth="1.500" /><path d="M6 6h10M6 8.500h10M7 11.300h8" stroke="#1a73c8" strokeWidth="1.500" strokeDasharray="1.500 1" /></svg>
        <svg viewBox="0 0 22 16" className="h-4 w-[22px]" fill="#b4bfca"><circle cx="9" cy="3.500" r="3" /><path d="M3 13q0-5 6-5 4 0 4 2v3z" /><text x="9" y="15" className="text-[8px] font-bold" fill="#8fa2b4">17</text></svg>
        <svg viewBox="0 0 22 16" className="h-4 w-[22px]" fill="#1a73c8"><path d="M4 4l4-3q3 2 6 0l4 3-2 4-1-.7V15H7V7.300L6 8z" /></svg>
        <svg viewBox="0 0 22 16" className="h-4 w-[22px]" fill="#1a73c8"><path d="M18 4.500l-3 2-2.500-.5-.5-2.500L14.500 1C11 0 8 3 9 6.500l-5.500 6q-.5 2 1 3H6L12.500 10C16 11 19 8 18 4.500z" /></svg>
      </div>
    </footer>
  );
}

const taskIcons: Record<string, ReactNode> = {
  petals: <g fill="#e4e4e4"><path d="M11.500 1H6Q1 1 1.500 6q0 4 5 4 4 0 4-4 0-3 1-5zM23 11.500V6q0-5-5-4.500-4 0-4 5 0 4 4 4 3 0 5 1zM12.500 23H18q5 0 4.500-5 0-4-5-4-4 0-4 4 0 3-1 5zM1 12.500V18q0 5 5 4.500 4 0 4-5 0-4-4-4-3 0-5-1z" /><path d="M12.300 1q-1.500 4 0 8-.3-6 5-8zM23 12.300q-4-1.500-8 0 6-.3 8 5z" /></g>,
  swirl: <path d="M21 2C16 6 13 3 9 5c-6 3-7 12-1 15 6 4 13-1 12-6-1-5-8-6-10-2-1 4 4 5 5 3M18 5c-6-1-10 3-10 7s5 6 8 4" fill="none" stroke="#ddd" strokeWidth="1.200" />,
  edge: <path d="M2 11C3 4 8 1 13 1c6 0 10 5 9 11H8c0 4 6 6 12 3v5C12 24 3 22 4 13c0-4 4-6 7-7-6 0-8 3-9 5zM8 9h8c0-4-7-4-8 0z" fill="#1080d8" fillRule="evenodd" />,
  store: <><path d="M1 7l21-2v19L1 21z" fill="#fff" /><path d="M7 6c0-7 8-7 9-1" fill="none" stroke="#ddd" strokeWidth="1.500" /><path d="M6 11h4v4H6zM11 10.500h5V15h-5zM6 16h4v3.500H6zM11 16h5v4h-5z" fill="#06090c" /></>,
  files: <><path d="M1 3h8l2 2h11v16H1z" fill="#fce08a" /><path d="M1 3h8v2H1z" fill="#e8b93a" /><path d="M5 12h13v9h-3v-4q0-1-3.500-1T8 17v4H5z" fill="#2ba4e0" /></>,
  gRed: <><path d="M23 1c-4 4-8 1-13 3C2 7 2 18 9 22c7 3 15-3 13-9-1-5-8-6-10-1-1 3 1 5 3 4-4 3-8-1-7-5 1-7 9-6 12-5 2-1 3-3 3-5z" fill="#2594c8" /><path d="M1 8l14 14-5 2L1 14z" fill="#e8505c" /></>,
  ggj: <><rect width="24" height="24" rx="3" fill="#0f92f0" /><path d="M12 4v16M5 11h14M5 11q0 3 3 4M12 20q4 0 4-4M15 7q0-3-3-3" fill="none" stroke="#fff" strokeWidth="2.200" /></>,
  note: <><rect width="24" height="24" rx="2" fill="#f0a020" /><path d="M2 2h20v20H2z" fill="#fdc440" /><path d="M3 8l14-3 2 12-13 4z" fill="#fff6e0" /><path d="M6 10l8-2M7 13l6-1.500M7.500 16l5-1" stroke="#a06a20" /><path d="M11 15L21 1l2 2-9 13-3 1z" fill="#c86a1c" /></>,
  gBlue: <path d="M23 2c-4 4-8 1-13 3C1 8 1 18 8 22c8 3 16-3 14-10-2-4-8-5-10-1-1 4 2 5 4 4-3 4-9 2-8-4 1-5 8-6 12-5 2-1 3-2 3-4z" fill="#1a8fe6" />,
  ie: <><circle cx="12" cy="12" r="11" fill="#eaf8ea" /><circle cx="12" cy="12" r="9.500" fill="#3fb83a" /><path d="M6 12h12c0-8-12-8-12 0 0 7 9 8 12 3" fill="none" stroke="#fff" strokeWidth="2.400" /><path d="M2 22C4 12 12 4 22 1" fill="none" stroke="#2a8f28" strokeWidth="1.500" /></>,
};

function TaskButton({ name, label, open, active }: { name: string; label: string; open?: boolean; active?: boolean }) {
  return (
    <button aria-label={label} className={clsx("flex h-10 w-[49px] shrink-0 flex-col items-center justify-between", active && "bg-[#364146]")}>
      <span className="grid h-[38px] place-items-center">
        <svg viewBox="0 0 24 24" className={clsx(name === "petals" ? "size-[22px]" : name === "swirl" ? "size-5" : "size-6")} aria-hidden="true">{taskIcons[name]}</svg>
      </span>
      <span className={clsx("h-0.5 shrink-0", active ? "w-full" : "w-10", open && "bg-[#76b9ed]")} />
    </button>
  );
}

function Taskbar() {
  return (
    <div className="flex h-10 shrink-0 items-center bg-[#020b0e] text-white">
      <button aria-label="开始" className="grid h-10 w-12 shrink-0 place-items-center bg-black">
        <svg viewBox="0 0 16 16" className="size-4" fill="#fff"><path d="M0 2.300l6.500-.9v6.100H0zM7.300 1.300L16 0v7.500H7.300zM0 8.400h6.500v6.200L0 13.700zM7.300 8.400H16V16l-8.700-1.300z" /></svg>
      </button>
      <label className="flex h-10 w-[344px] shrink-0 items-center bg-[#333434] pl-2">
        <svg viewBox="0 0 24 24" className="size-6" fill="none"><circle cx="12" cy="12" r="9.500" stroke="#fff" strokeWidth="2.600" /></svg>
        <input aria-label="搜索" placeholder="在这里输入你要搜索的内容" className="ml-1 min-w-0 flex-1 bg-transparent text-[14px] outline-none placeholder:text-[#9c9c9c]" />
        <svg viewBox="0 0 12 18" className="mr-3.5 h-[18px] w-3" fill="none" stroke="#a8a8a8"><rect x="3.500" y="1" width="5" height="10" rx="1" /><path d="M1 8v5.500h10V8M6 13.500V17M3 17h6" /></svg>
      </label>
      <div className="ml-0.5 flex items-center">
        <TaskButton name="petals" label="应用" />
        <TaskButton name="swirl" label="广联达" />
        <span className="flex w-6 justify-center gap-0.5"><i className="h-4 w-px bg-[#4a4f50]" /><i className="h-4 w-px bg-[#4a4f50]" /></span>
        <TaskButton name="edge" label="Edge" />
        <TaskButton name="store" label="应用商店" />
        <TaskButton name="files" label="文件资源管理器" />
        <TaskButton name="gRed" label="广联达 G+" open />
        <TaskButton name="ggj" label="GGJ2013" open active />
        <TaskButton name="note" label="记事" open />
        <TaskButton name="gBlue" label="广联达云" open />
        <TaskButton name="ie" label="浏览器" open />
      </div>
      <div className="ml-auto flex items-center text-[12px] leading-[17px]">
        <div className="mr-5 text-center">26%<br />CPU使用</div>
        <svg viewBox="0 0 12 8" className="h-2 w-3" fill="none" stroke="#fff" strokeWidth="1.300"><path d="M1 7l5-5 5 5" /></svg>
        <svg viewBox="0 0 17 12" className="ml-2.5 h-3 w-[17px]" fill="none" stroke="#fff"><path d="M6.500 3.500h8v7h-10V8" /><path d="M7 5h6v4H6z" fill="#fff" /><path d="M1 3.500h5V6q-2.500 2-5 0zM2 1v2M5 1v2M15.500 5v4" /></svg>
        <svg viewBox="0 0 14 14" className="ml-[9px] size-3.5" fill="none" stroke="#fff"><path d="M1 12A11 11 0 0 1 13 2.500M4 13a9 9 0 0 1 9-7M7 13a6 6 0 0 1 6-4" /><path d="M10 13a3 3 0 0 1 3-2v2z" fill="#fff" /></svg>
        <svg viewBox="0 0 16 14" className="ml-2 h-3.5 w-4" fill="none" stroke="#fff"><path d="M1 5h2.500L7 1.500v11L3.500 9H1zM9.500 4.500q1.500 2.500 0 5M11.500 3q2.500 4 0 8M13.500 1.500q3.500 5.500 0 11" /></svg>
        <span className="ml-2 text-[14px]">中</span>
        <SLogo className="ml-3.5 size-4" />
        <div className="ml-[18px] text-center">16:59<br />2017/8/29</div>
        <button aria-label="通知中心" className="mr-[13px] ml-5">
          <svg viewBox="0 0 24 24" className="size-6"><path d="M0 1h16v12H6l-3 3v-3H0z" fill="#fff" /><path d="M3 4.500h10M3 7h10M3 9.500h7" stroke="#111" /><circle cx="15.500" cy="15.500" r="7.500" fill="#222" stroke="#999" /><text x="15.500" y="20" textAnchor="middle" fill="#fff" className="text-[12px]">2</text></svg>
        </button>
        <i className="mr-1 h-10 w-px bg-[#4a4f50]" />
      </div>
    </div>
  );
}

export default function App() {
  return (
    <div className="flex h-screen flex-col overflow-hidden bg-[#f0f0f0] font-['Noto_Sans','Noto_Sans_CJK_SC',sans-serif] text-[12px] leading-4 text-black">
      <TitleBar />
      <MenuRow />
      <MainToolbar />
      <div className="flex min-h-0 flex-1">
        <Navigator />
        <main className="ml-1 flex min-w-0 flex-1 flex-col">
          <EditRows />
          <div className="relative min-h-0 flex-1 overflow-hidden bg-black">
            <Scene />
            <RebarPanel />
          </div>
          <SnapRow />
          <RebarPane />
        </main>
      </div>
      <StatusBar />
      <Taskbar />
    </div>
  );
}
